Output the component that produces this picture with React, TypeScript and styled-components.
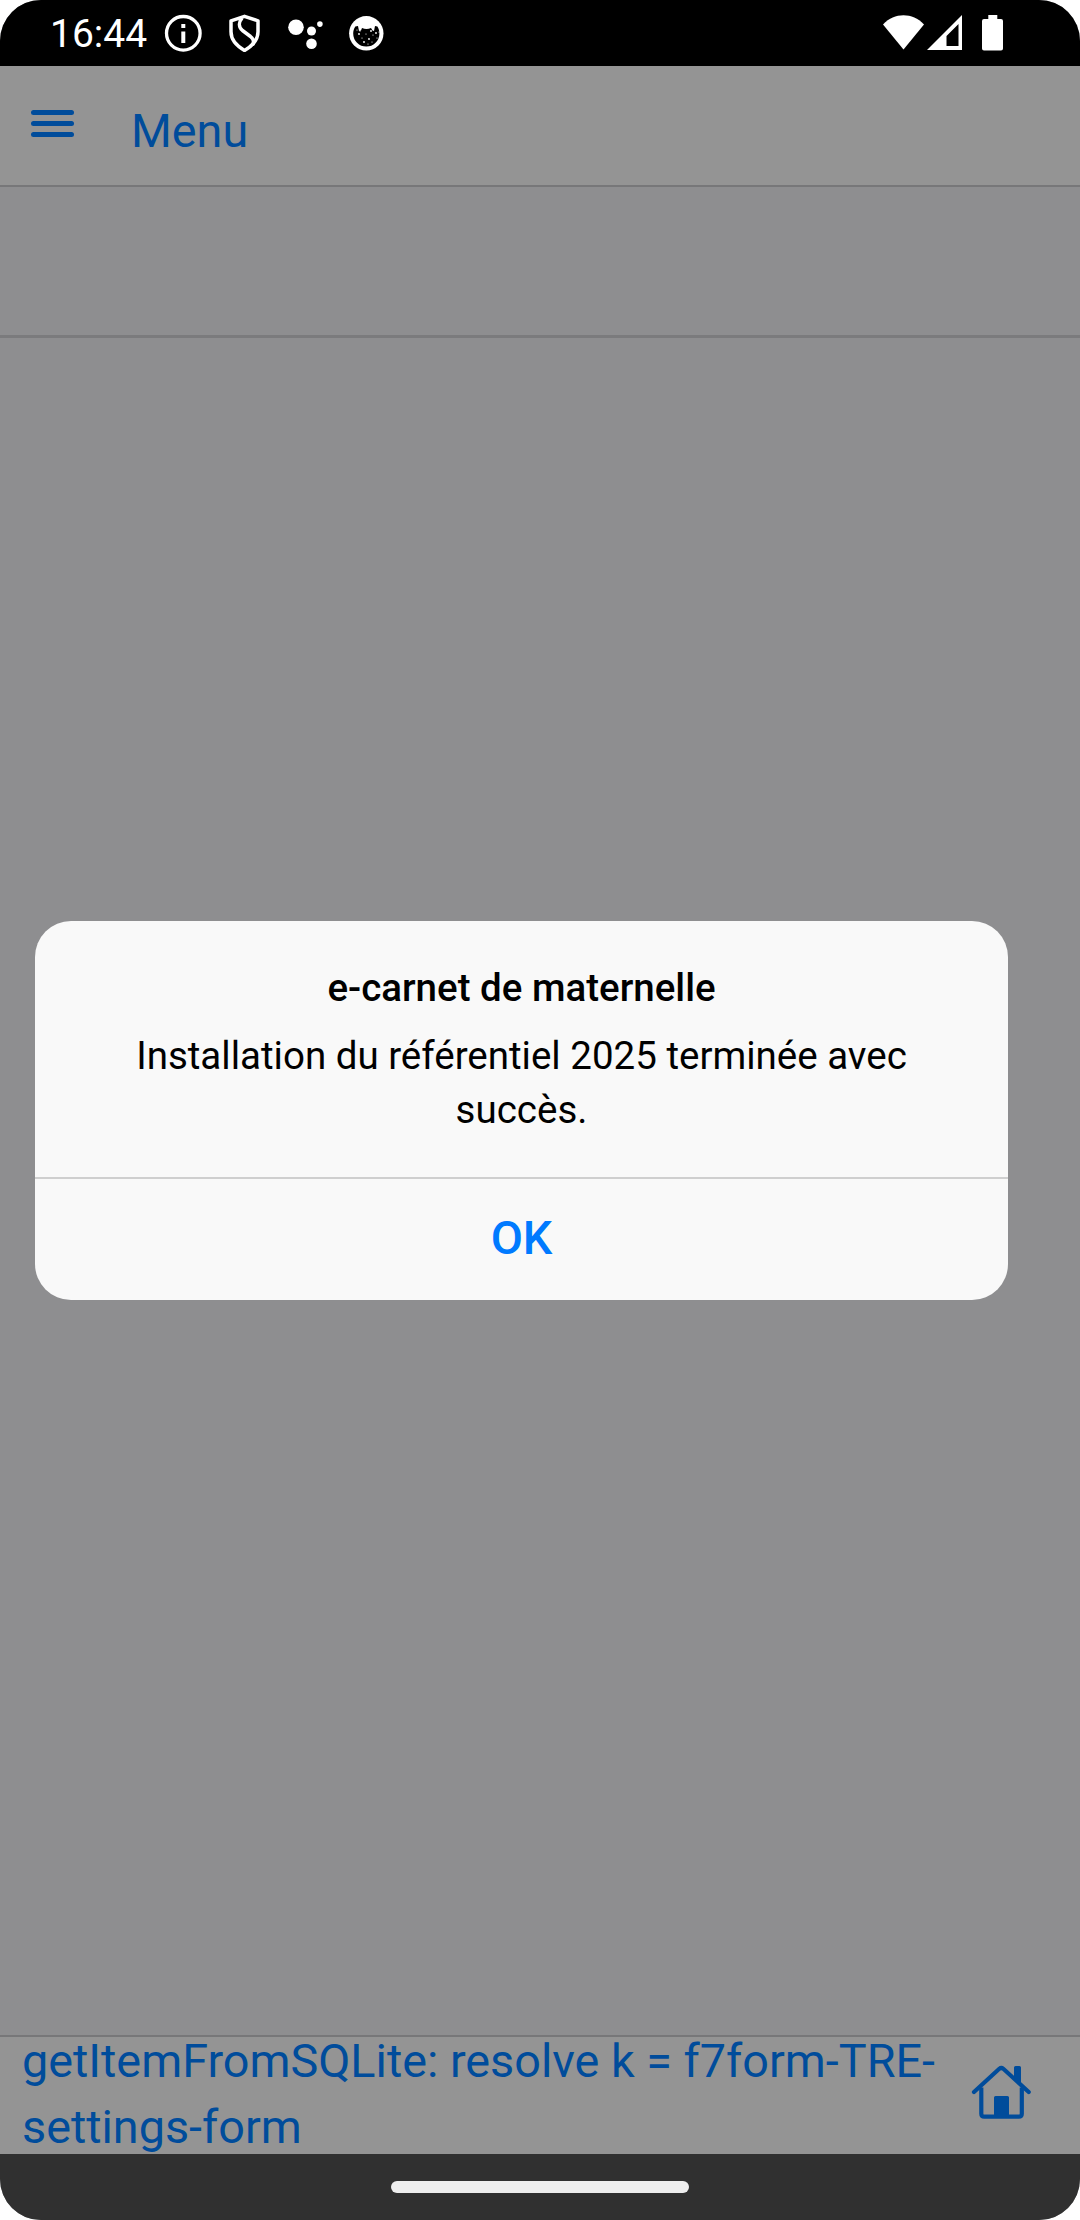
import React from "react";
import styled, { createGlobalStyle } from "styled-components";

const GlobalStyle = createGlobalStyle`
  html, body { margin: 0; padding: 0; background: #fff; }
  * { box-sizing: border-box; }
`;

const Screen = styled.div`
  position: relative;
  display: flex;
  flex-direction: column;
  width: 1080px;
  height: 2220px;
  overflow: hidden;
  border-radius: 41px;
  background: #8e8e90;
  font-family: Roboto, sans-serif;
`;

const StatusBar = styled.header`
  display: flex;
  justify-content: space-between;
  flex: none;
  height: 66px;
  padding: 0 76px 0 50px;
  background: #000;
  color: #fff;
`;

const StatusGroup = styled.div`
  display: flex;
  align-items: flex-start;
`;

const Clock = styled.time`
  width: 114px;
  padding-top: 11px;
  font-size: 39px;
  line-height: 46px;
`;

const StatusIcon = styled.svg<{ $gap?: number }>`
  flex: none;
  display: block;
  margin-top: 14px;
  margin-left: ${(p) => p.$gap ?? 0}px;
`;

const Navbar = styled.nav`
  display: flex;
  flex: none;
  height: 121px;
  padding-left: 31px;
  background: #949494;
  border-bottom: 2px solid #777779;
  color: #004c9b;
`;

const MenuButton = styled.button`
  display: flex;
  flex-direction: column;
  gap: 6px;
  width: 100px;
  height: 119px;
  padding: 44px 0 0;
  border: 0;
  background: none;
`;

const MenuLine = styled.span`
  width: 43px;
  height: 5px;
  border-radius: 3px;
  background: #004c9b;
`;

const NavTitle = styled.div`
  padding-top: 32px;
  font-size: 46.75px;
  line-height: 66px;
`;

const SubBar = styled.div`
  flex: none;
  height: 151px;
  border-bottom: 3px solid #7b7b7d;
`;

const Content = styled.main`
  flex: 1;
`;

const Toolbar = styled.footer`
  display: flex;
  flex: none;
  justify-content: space-between;
  height: 119px;
  padding: 0 48px 0 22px;
  background: #949494;
  border-top: 2px solid #777779;
  color: #004c9b;
`;

const Message = styled.p`
  width: 930px;
  margin: -9px 0 0;
  font-size: 46.75px;
  line-height: 66px;
`;

const HomeIcon = styled.svg`
  flex: none;
  display: block;
  margin-top: 27px;
`;

const GestureBar = styled.div`
  display: flex;
  flex: none;
  justify-content: center;
  height: 66px;
  padding-top: 27px;
  background: #303030;
`;

const Handle = styled.div`
  width: 298px;
  height: 12px;
  border-radius: 6px;
  background: #eee;
`;

const Dialog = styled.section`
  position: absolute;
  left: 35px;
  top: 921px;
  display: flex;
  flex-direction: column;
  width: 973px;
  height: 379px;
  border-radius: 36px;
  overflow: hidden;
  background: #f9f9f9;
  color: #000;
  text-align: center;
`;

const DialogBody = styled.div`
  height: 258px;
  padding: 40px 41px 0;
  border-bottom: 2px solid #cfcfcf;
`;

const DialogTitle = styled.h1`
  margin: 0;
  font-size: 38.5px;
  font-weight: 500;
  line-height: 54px;
`;

const DialogText = styled.p`
  margin: 14px 0 0;
  font-size: 38.5px;
  line-height: 54px;
`;

const DialogButton = styled.button`
  flex: 1;
  padding: 0 0 4px;
  border: 0;
  background: none;
  color: #007aff;
  font-family: inherit;
  font-size: 46.75px;
  font-weight: 500;
`;

const SPECKS = [
  [10, 20], [13, 24], [17, 20], [20, 25], [24, 21], [28, 24], [15, 28],
  [19, 30], [23, 28], [27, 19], [8, 16], [30, 18], [22, 17], [11, 17],
];

export default function App() {
  return (
    <>
      <GlobalStyle />
      <Screen>
        <StatusBar>
          <StatusGroup>
            <Clock>16:44</Clock>
            <StatusIcon width="38" height="38" viewBox="0 0 38 38">
              <circle cx="19.3" cy="19.3" r="16.8" fill="none" stroke="#fff" strokeWidth="3.3" />
              <path d="M17.3 10h4v4h-4zM17.3 17.5h4v11.5h-4z" fill="#fff" />
            </StatusIcon>
            <StatusIcon $gap={26} width="34" height="38" viewBox="0 0 34 38" fill="none" stroke="#fff" strokeWidth="3.5" strokeLinejoin="round">
              <path d="M16.5 2.3 30 6.8v11c0 7.6-5 13.8-13.5 18.6C8 31.6 3 25.4 3 17.8v-11z" />
              <path d="M14 4c-3.500 4-3.500 9 .5 12.500l8 6c3.500 3 4 5.500 2 8.500" />
            </StatusIcon>
            <StatusIcon $gap={26} width="36" height="38" viewBox="0 0 36 38" fill="#fff">
              <circle cx="8" cy="13.3" r="7.8" />
              <circle cx="23.5" cy="17" r="4.5" />
              <circle cx="31.9" cy="10.1" r="2.8" />
              <circle cx="23.5" cy="29.7" r="5.3" />
            </StatusIcon>
            <StatusIcon $gap={25} width="36" height="38" viewBox="0 0 36 38">
              <circle cx="17.3" cy="19.3" r="17.2" fill="#fff" />
              <path
                d="M6.300 12.500 9 12l1 5 2-.5 1-2.500c3 1.300 6 1.300 9 0l1.500 2.500 1.500.5 1-5 2.400.500c1.500 2.500 2 4.500 2 7a13 13 0 0 1-26.200 0c0-2.500.6-4.700 2.100-7z"
                fill="#000"
              />
              {SPECKS.map(([x, y], i) => (
                <circle key={i} cx={x} cy={y} r={i % 3 === 0 ? 0.9 : 0.6} fill="#fff" />
              ))}
            </StatusIcon>
          </StatusGroup>
          <StatusGroup>
            <StatusIcon width="42" height="38" viewBox="0 0 42 38" fill="#fff">
              <path d="M0 10.500C6 4 13 1.200 20.500 1.200S35 4 41 10.500L20.500 35.500z" />
            </StatusIcon>
            <StatusIcon $gap={2} width="36" height="38" viewBox="0 0 36 38" fill="#fff">
              <path fillRule="evenodd" d="M35 1v35H0zM31.500 10 19.500 22v10h12z" />
            </StatusIcon>
            <StatusIcon $gap={19} width="22" height="38" viewBox="0 0 22 38" fill="#fff">
              <path d="M6.300 1h9v4H19q2 0 2 2v27.500q0 2-2 2H2q-2 0-2-2V7q0-2 2-2h4.300z" />
            </StatusIcon>
          </StatusGroup>
        </StatusBar>
        <Navbar>
          <MenuButton aria-label="Menu">
            <MenuLine />
            <MenuLine />
            <MenuLine />
          </MenuButton>
          <NavTitle>Menu</NavTitle>
        </Navbar>
        <SubBar />
        <Content />
        <Toolbar>
          <Message>getItemFromSQLite: resolve k = f7form-TRE-settings-form</Message>
          <HomeIcon width="62" height="56" viewBox="20 24 62 56" fill="none" stroke="#004c9b" strokeWidth="4.2" strokeLinecap="round" strokeLinejoin="round">
            <path d="M24 52 49.300 28.800q2-1.700 4 0L78.700 52" />
            <path d="M31.300 47.500V73.700q0 3 3 3h34.500q3 0 3-3V47.500" strokeLinecap="butt" />
            <path d="M44 77V57.500q0-1.500 1.500-1.500h12q1.500 0 1.500 1.500V77zM64 37V27.500q0-1.500 1.500-1.500h4q1.500 0 1.500 1.500V44z" fill="#004c9b" stroke="none" />
          </HomeIcon>
        </Toolbar>
        <GestureBar>
          <Handle />
        </GestureBar>
        <Dialog role="dialog">
          <DialogBody>
            <DialogTitle>e-carnet de maternelle</DialogTitle>
            <DialogText>Installation du référentiel 2025 terminée avec succès.</DialogText>
          </DialogBody>
          <DialogButton>OK</DialogButton>
        </Dialog>
      </Screen>
    </>
  );
}
